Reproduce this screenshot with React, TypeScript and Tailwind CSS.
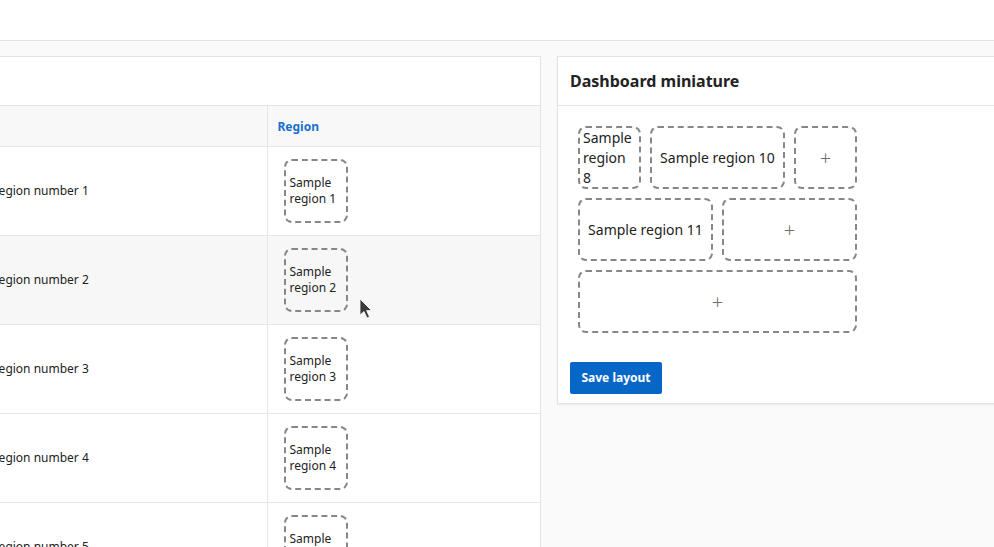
const rows = [1, 2, 3, 4, 5];

type Cell = { span: string; label?: string };

const miniCells: Cell[] = [
  { span: "col-span-1", label: "Sample region 8" },
  { span: "col-span-2", label: "Sample region 10" },
  { span: "col-span-1" },
  { span: "col-span-2", label: "Sample region 11" },
  { span: "col-span-2" },
  { span: "col-span-4" },
];

function RegionChip({ n }: { n: number }) {
  return (
    <div className="w-[64px] h-[64px] border-2 border-dashed border-[#878787] rounded-lg p-1 flex items-center text-xs leading-4 text-[#222]">
      Sample region {n}
    </div>
  );
}

export default function App() {
  return (
    <div
      className="w-[994px] h-[547px] overflow-hidden bg-[#fafafa] relative"
      style={{ fontFamily: '"Noto Sans", "Open Sans", sans-serif' }}
    >
      <header className="h-[41px] bg-white border-b border-[#e3e3e3]" />

      <div className="flex items-start gap-4 pt-[15px] -ml-[300px]">
        {/* table card, partly scrolled off to the left */}
        <section className="w-[841px] shrink-0 bg-white border border-[#e3e3e3]">
          <div className="h-[49px] border-b border-[#e3e3e3] px-3 flex items-center">
            <h2 className="text-base font-bold text-[#222]">Regions</h2>
          </div>
          <table className="w-full border-collapse text-xs text-[#222]">
            <thead>
              <tr className="bg-[#f8f8f8] h-[40px]">
                <th className="w-[238px] text-left font-bold px-[10px] pt-[2px]">ID</th>
                <th className="w-[328px] text-left font-bold px-[10px] pt-[2px]">Name</th>
                <th className="text-left font-bold px-[10px] pt-[2px] text-[#1a6fcf] border-l border-[#e6e6e6]">
                  Region
                </th>
              </tr>
            </thead>
            <tbody>
              {rows.map((n) => (
                <tr
                  key={n}
                  className={
                    "border-t border-[#e6e6e6] " + (n === 2 ? "bg-[#f7f7f7]" : "bg-white")
                  }
                >
                  <td className="px-[10px]">{n}</td>
                  <td className="px-[10px] align-middle">Sample region number {n}</td>
                  <td className="border-l border-[#e6e6e6] pl-4 py-3">
                    <RegionChip n={n} />
                  </td>
                </tr>
              ))}
            </tbody>
          </table>
        </section>

        {/* dashboard miniature card */}
        <section className="w-[500px] shrink-0 bg-white border border-[#e3e3e3] shadow-[0_1px_2px_rgba(0,0,0,0.06)]">
          <div className="h-[49px] border-b border-[#e3e3e3] px-3 flex items-center">
            <h2 className="text-base font-bold text-[#222]">Dashboard miniature</h2>
          </div>
          <div className="px-3 pt-3 pb-[9px]">
            <div className="p-2 grid grid-cols-[repeat(4,63px)] auto-rows-[63px] gap-[9px]">
              {miniCells.map((c, i) => (
                <div
                  key={i}
                  className={
                    c.span +
                    " border-2 border-dashed border-[#878787] rounded-lg px-[3px] flex items-center justify-center text-sm leading-5 text-[#222]"
                  }
                >
                  {c.label ?? (
                    <span className="text-xl font-light text-[#707070]">+</span>
                  )}
                </div>
              ))}
            </div>
            <button className="mt-[21px] h-[32px] w-[92px] rounded-[2px] bg-[#0767c7] text-white text-xs font-bold">
              Save layout
            </button>
          </div>
        </section>
      </div>

      {/* mouse pointer */}
      <svg
        className="absolute left-[359px] top-[298px]"
        width="14"
        height="22"
        viewBox="0 0 14 22"
      >
        <path d="M1 1 L1 17 L5 13.5 L8 20 L10.5 19 L7.6 12.6 L12.5 12.5 Z" fill="#3a3a3a" stroke="#fafafa" strokeWidth="0.8" />
      </svg>
    </div>
  );
}
